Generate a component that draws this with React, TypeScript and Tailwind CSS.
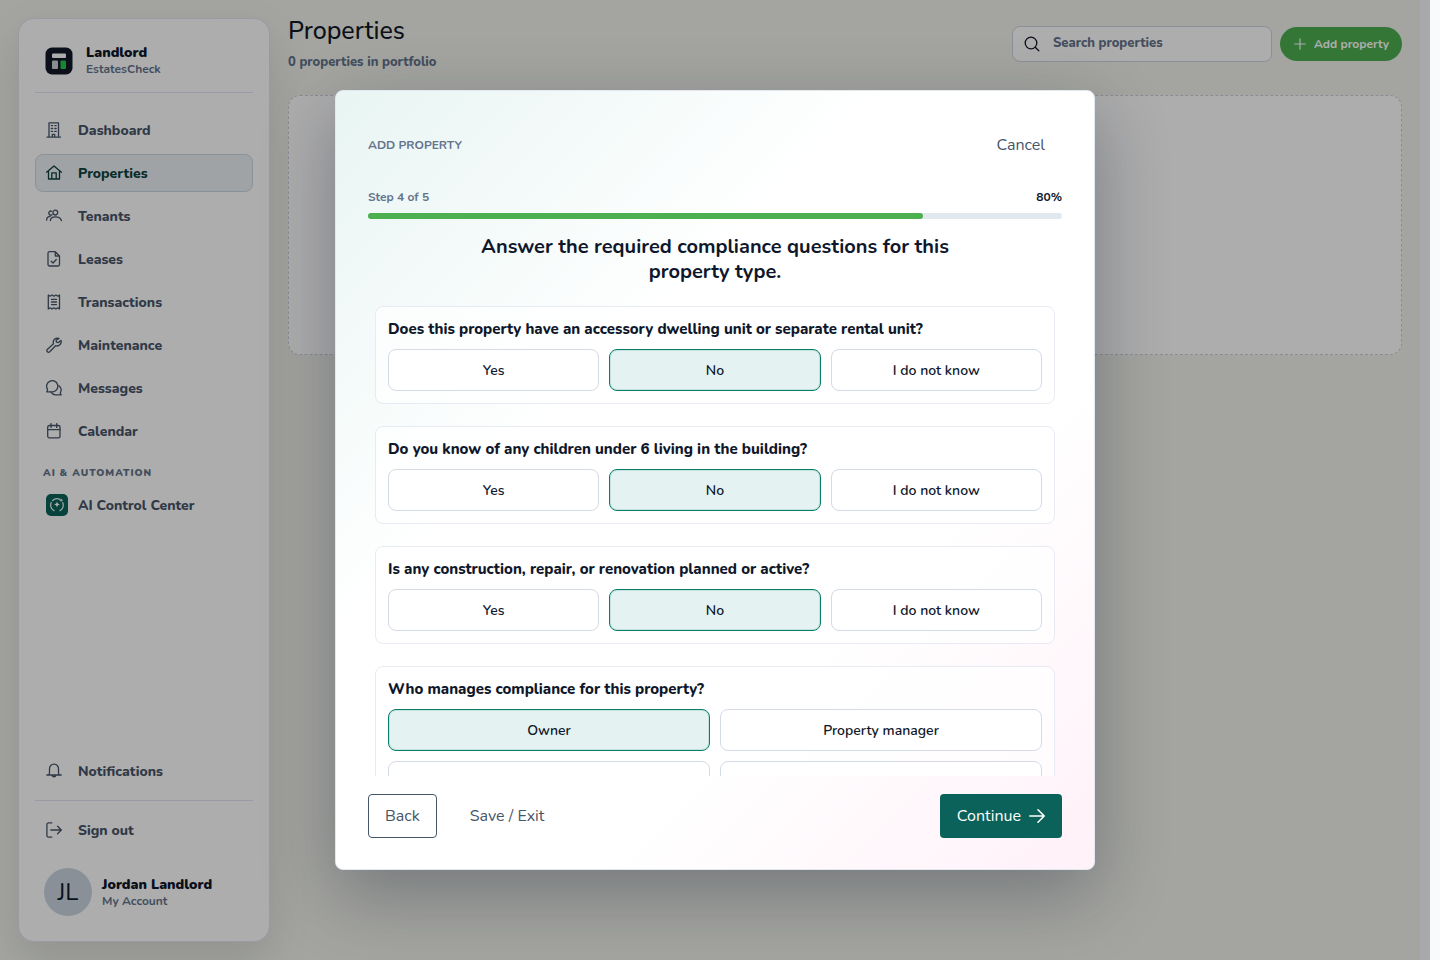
import type { ReactNode } from 'react'

const icons: Record<string, ReactNode> = {
  dashboard: (
    <>
      <path d="M3 14.900V.9h9.500v14M1 15.100h13.500M6.300 15v-2.600h2.400V15" />
      <path d="M5.300 3.600h1.400M8.800 3.600h1.400M5.300 6.500h1.400M8.800 6.500h1.400M5.300 9.400h1.400M8.800 9.400h1.400" />
    </>
  ),
  properties: <path d="M.6 7.200 8 1l7.400 6.200M2.500 6v8h11V6M5.800 13.800V7.800h4.400v6" />,
  tenants: (
    <>
      <circle cx="9.300" cy="4.600" r="2.400" />
      <path d="M4.400 12.600c0-2.400 2-3.800 5.100-3.800s5.200 1.400 5.900 3.800M6 6.700a2 2 0 1 1-.2-3.400M.6 12.200c0-2.400 1.300-3.800 3.600-3.900" />
    </>
  ),
  leases: <path d="M9.300.7H3.400a1.400 1.400 0 0 0-1.400 1.400v11.500A1.400 1.400 0 0 0 3.400 15h8.700a1.400 1.400 0 0 0 1.400-1.400V5zM9.300.7V5h4.200M5.200 10.200l1.800 1.800 3.300-3.500" />,
  transactions: (
    <path d="M2.300 1v14l1.900-1.200L6.100 15 8 13.800 9.900 15l1.900-1.200 1.700 1.200V1l-1.700 1.200L9.900 1 8 2.200 6.100 1 4.200 2.200zM5.500 5.400h5M5.500 8h5M5.500 10.600h5" />
  ),
  maintenance: (
    <path d="M13 1.400a4.200 4.200 0 0 0-5.500 5.300L1.300 12.400a1.700 1.700 0 0 0 2.400 2.400l5.900-6.100a4.200 4.200 0 0 0 5.400-5.200l-2.600 2.100-2-.4-.2-1.900z" />
  ),
  messages: (
    <>
      <path d="M.8 11.800c.7-.8.900-1.600.6-2.700A5.600 5.600 0 1 1 7 11.800z" />
      <path d="M5 12.200a5.400 5.400 0 0 0 4.700 2.600h5.500c-.8-.8-1-1.500-.7-2.500a5.400 5.400 0 0 0-1.500-6.600" />
    </>
  ),
  calendar: (
    <>
      <rect x="1.700" y="2.500" width="12.300" height="12.300" rx="1.600" />
      <path d="M1.700 6.600h12.300M5 .6v3.800M10.700 .6v3.800" />
    </>
  ),
  notifications: (
    <path d="M2.800 12c.5-.8.700-1.500.7-2.500V5.800A4.400 4.400 0 0 1 8 1.200a4.400 4.400 0 0 1 4.500 4.600v3.700c0 1 .2 1.700.7 2.500M.8 12h14.400M6 12.300a2.100 2.100 0 0 0 4 0" />
  ),
  signout: <path d="M5.800.9H2.600A1.700 1.700 0 0 0 .9 2.600v10.800a1.700 1.700 0 0 0 1.700 1.700h3.200M4.800 8h10.400M11.600 4.300 15.300 8l-3.700 3.700" />,
  search: (
    <>
      <circle cx="7" cy="7" r="5.800" />
      <path d="m11.200 11.200 3.600 3.600" />
    </>
  ),
  plus: <path d="M8 2v12M2 8h12" />,
  arrow: <path d="M.8 8h14.400M9 1.800 15.200 8 9 14.200" strokeWidth="1.600" />,
}

function Icon({ name, className = 'size-4' }: { name: string; className?: string }) {
  return (
    <svg viewBox="0 0 16 16" fill="none" stroke="currentColor" strokeWidth="1.300" strokeLinecap="round" strokeLinejoin="round" className={className} aria-hidden="true">
      {icons[name]}
    </svg>
  )
}

const navItems = [
  { icon: 'dashboard', label: 'Dashboard' },
  { icon: 'properties', label: 'Properties', active: true },
  { icon: 'tenants', label: 'Tenants' },
  { icon: 'leases', label: 'Leases' },
  { icon: 'transactions', label: 'Transactions' },
  { icon: 'maintenance', label: 'Maintenance' },
  { icon: 'messages', label: 'Messages' },
  { icon: 'calendar', label: 'Calendar' },
]

const triState = ['Yes', 'No', 'I do not know']

const questions = [
  { title: 'Does this property have an accessory dwelling unit or separate rental unit?', options: triState, selected: 'No' },
  { title: 'Do you know of any children under 6 living in the building?', options: triState, selected: 'No' },
  { title: 'Is any construction, repair, or renovation planned or active?', options: triState, selected: 'No' },
  { title: 'Who manages compliance for this property?', options: ['Owner', 'Property manager', '', ''], selected: 'Owner' },
]

function NavLink({ icon, label, active }: { icon: string; label: string; active?: boolean }) {
  return (
    <a
      href="#"
      className={`flex h-[38px] items-center gap-2.5 rounded-lg border px-2.5 text-[14px] font-extrabold ${
        active ? 'border-[#cbd8e2] bg-[#eaf1f5] text-[#0f423d]' : 'border-transparent text-[#475569]'
      }`}
    >
      <span className="w-[22px]">
        <Icon name={icon} />
      </span>
      {label}
    </a>
  )
}

function Sidebar() {
  return (
    <aside className="m-[18px] flex w-[252px] shrink-0 flex-col rounded-2xl border border-[#e2e4f0] bg-white px-4 shadow-[0_18px_44px_rgba(15,23,42,0.12)]">
      <div className="flex h-[74px] items-center gap-[13px] border-b border-[#e2e4f0] px-2.5 pt-2.5">
        <svg viewBox="0 0 28 28" className="size-7" aria-hidden="true">
          <rect x="0.500" y="0.500" width="27" height="27" rx="6.500" fill="#111827" />
          <rect x="7" y="6.500" width="14" height="4.500" rx="1" fill="#fff" />
          <rect x="7" y="13.500" width="6" height="8.500" rx="1" fill="#cbd0d8" />
          <rect x="15.500" y="13.500" width="5.500" height="8.500" rx="1" fill="#22c94a" />
        </svg>
        <div>
          <p className="text-[14px] leading-[17px] font-black text-[#0f172a]">Landlord</p>
          <p className="text-[12px] leading-4 font-bold text-[#64748b]">EstatesCheck</p>
        </div>
      </div>

      <nav className="mt-[18px] flex flex-col gap-[5px]">
        {navItems.map((item) => (
          <NavLink key={item.label} {...item} />
        ))}
      </nav>
      <p className="mt-[15px] mb-[5px] px-2 text-[10px] leading-4 font-black tracking-widest text-[#64748b]">AI &amp; AUTOMATION</p>
      <a href="#" className="flex h-[38px] items-center gap-2.5 px-[11px] text-[14px] font-extrabold text-[#475569]">
        <svg viewBox="0 0 22 22" className="size-[22px]" fill="none" aria-hidden="true">
          <rect width="22" height="22" rx="5" fill="#0b625a" />
          <path
            d="M8 16.600a6.200 6.200 0 0 1-2.800-8M6.500 6.600a6.200 6.200 0 0 1 7-1.400M16.700 8.600a6.200 6.200 0 0 1-2.700 8M14.300 6.200h1.800M15.200 5.300v1.800"
            stroke="#e5f3f0"
            strokeWidth="1.300"
            strokeLinecap="round"
          />
          <path d="M11 7.300c.4 2.300.9 2.800 3.200 3.200-2.300.4-2.800.9-3.200 3.200-.4-2.300-.9-2.800-3.200-3.200 2.300-.4 2.800-.9 3.200-3.200z" fill="#fff" />
        </svg>
        AI Control Center
      </a>

      <div className="mt-auto">
        <NavLink icon="notifications" label="Notifications" />
        <div className="mt-2.5 border-t border-[#e2e4f0] pt-2.5">
          <NavLink icon="signout" label="Sign out" />
        </div>
        <a href="#" className="mt-[19px] mb-[25px] flex items-center gap-2.5 px-[9px]">
          <span className="flex size-12 items-center justify-center rounded-full bg-[#cbd5e1] text-[24px] text-[#111827]">JL</span>
          <span>
            <span className="block text-[14px] leading-[17px] font-black text-[#0f172a]">Jordan Landlord</span>
            <span className="block text-[12px] leading-4 font-bold text-[#64748b]">My Account</span>
          </span>
        </a>
      </div>
    </aside>
  )
}

function PropertiesPage() {
  return (
    <main className="min-w-0 flex-1 pt-4 pr-[18px]">
      <header className="flex items-center justify-between">
        <div>
          <h1 className="text-[25px] leading-[31px] font-medium text-[#111827]">Properties</h1>
          <p className="mt-[5px] text-[13px] leading-5 font-extrabold text-[#64748b]">0 properties in portfolio</p>
        </div>
        <div className="flex items-center gap-2">
          <label className="flex h-9 w-[260px] items-center gap-[13px] rounded-lg border border-[#cbd5e1] bg-white px-[11px] text-[#111827]">
            <Icon name="search" />
            <input
              type="search"
              aria-label="Search properties"
              placeholder="Search properties"
              className="min-w-0 flex-1 bg-transparent text-[13px] font-extrabold outline-none placeholder:text-[#64748b]"
            />
          </label>
          <button type="button" className="flex h-[34px] items-center gap-[7px] rounded-full bg-[#4caf50] px-[13px] text-[12px] font-bold text-white">
            <Icon name="plus" className="size-3.5" />
            Add property
          </button>
        </div>
      </header>
      <section className="mt-[23px] h-[260px] rounded-xl border border-dashed border-[#cbd0d8] bg-white" />
    </main>
  )
}

function AddPropertyDialog() {
  return (
    <div
      role="dialog"
      aria-modal="true"
      aria-label="Add property"
      className="flex h-[780px] max-h-full w-full max-w-[760px] flex-col rounded-lg border border-[#e2e8f0] bg-[linear-gradient(135deg,#e8f5f3_0%,#ffffff_36%,#ffffff_68%,#fff1f8_100%)] px-8 pt-8 pb-[31px] shadow-[0_24px_72px_rgba(15,23,42,0.32)]"
    >
      <div className="flex h-11 shrink-0 items-center justify-between">
        <p className="text-[12px] font-bold text-[#64748b]">ADD PROPERTY</p>
        <button type="button" className="h-11 px-[17px] text-[16px] text-[#475569]">
          Cancel
        </button>
      </div>

      <div className="mt-5 flex justify-between text-[12px] leading-5 font-bold">
        <span className="text-[#64748b]">Step 4 of 5</span>
        <span className="text-[#0f172a]">80%</span>
      </div>
      <div className="mt-1.5 h-1.5 shrink-0 rounded-full bg-[#e2e8f0]">
        <div className="h-full w-4/5 rounded-full bg-[#4caf50]" />
      </div>

      <h2 className="mx-auto mt-[15px] max-w-[520px] text-center text-[20px] leading-[25px] font-bold text-[#0f172a]">
        Answer the required compliance questions for this property type.
      </h2>

      <div className="mx-auto mt-[22px] flex min-h-0 w-full max-w-[680px] flex-1 flex-col gap-[22px] overflow-hidden">
        {questions.map((q) => (
          <section key={q.title} className="shrink-0 rounded-lg border border-[#e8ebf1] bg-white/70 p-3">
            <h3 className="text-[15px] leading-5 font-extrabold text-[#0f172a]">{q.title}</h3>
            <div className={`mt-2.5 grid gap-2.5 ${q.options.length === 3 ? 'grid-cols-3' : 'grid-cols-2'}`}>
              {q.options.map((option, i) => (
                <button
                  key={i}
                  type="button"
                  aria-pressed={option === q.selected}
                  className={`h-[42px] rounded-lg border text-[14px] font-semibold text-[#0f172a] ${
                    option === q.selected
                      ? 'border-[#087f6d] bg-[#e4f3f2] shadow-[inset_0_0_0_1px_rgba(8,127,109,0.15)]'
                      : 'border-[#d5dbe5] bg-white'
                  }`}
                >
                  {option}
                </button>
              ))}
            </div>
          </section>
        ))}
      </div>

      <div className="mt-[18px] flex shrink-0 items-center gap-4 text-[16px] text-[#475569]">
        <button type="button" className="h-11 rounded border border-[#475569] bg-white px-4">
          Back
        </button>
        <button type="button" className="h-11 px-[17px]">
          Save / Exit
        </button>
        <button type="button" className="ml-auto flex h-11 items-center gap-2 rounded bg-[#0b625a] px-[17px] text-white">
          Continue
          <Icon name="arrow" />
        </button>
      </div>
    </div>
  )
}

export default function App() {
  return (
    <div className="flex h-screen bg-[#f8fafc] pr-2.5 font-['Nunito','Lato',sans-serif]">
      <div className="relative flex min-w-0 flex-1 overflow-hidden pr-2.5">
        <div className="flex min-w-0 flex-1 bg-[#f2f3ec]">
          <Sidebar />
          <PropertiesPage />
        </div>
        <div className="absolute inset-0 flex items-center justify-center bg-black/32 p-6">
          <AddPropertyDialog />
        </div>
      </div>
    </div>
  )
}
